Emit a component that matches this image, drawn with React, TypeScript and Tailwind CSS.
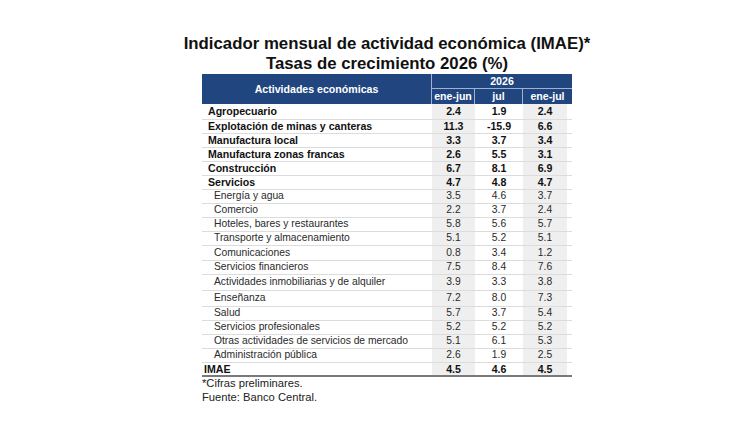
const rows: { label: string; v: [string, string, string]; bold?: boolean; sub?: boolean; h?: string }[] = [
  { label: 'Agropecuario', v: ['2.4', '1.9', '2.4'], bold: true, h: 'h-[16px]' },
  { label: 'Explotación de minas y canteras', v: ['11.3', '-15.9', '6.6'], bold: true },
  { label: 'Manufactura local', v: ['3.3', '3.7', '3.4'], bold: true },
  { label: 'Manufactura zonas francas', v: ['2.6', '5.5', '3.1'], bold: true },
  { label: 'Construcción', v: ['6.7', '8.1', '6.9'], bold: true },
  { label: 'Servicios', v: ['4.7', '4.8', '4.7'], bold: true },
  { label: 'Energía y agua', v: ['3.5', '4.6', '3.7'], sub: true },
  { label: 'Comercio', v: ['2.2', '3.7', '2.4'], sub: true },
  { label: 'Hoteles, bares y restaurantes', v: ['5.8', '5.6', '5.7'], sub: true },
  { label: 'Transporte y almacenamiento', v: ['5.1', '5.2', '5.1'], sub: true },
  { label: 'Comunicaciones', v: ['0.8', '3.4', '1.2'], sub: true, h: 'h-[15px]' },
  { label: 'Servicios financieros', v: ['7.5', '8.4', '7.6'], sub: true },
  { label: 'Actividades inmobiliarias y de alquiler', v: ['3.9', '3.3', '3.8'], sub: true, h: 'h-[16px]' },
  { label: 'Enseñanza', v: ['7.2', '8.0', '7.3'], sub: true, h: 'h-[16px]' },
  { label: 'Salud', v: ['5.7', '3.7', '5.4'], sub: true },
  { label: 'Servicios profesionales', v: ['5.2', '5.2', '5.2'], sub: true },
  { label: 'Otras actividades de servicios de mercado', v: ['5.1', '6.1', '5.3'], sub: true },
  { label: 'Administración pública', v: ['2.6', '1.9', '2.5'], sub: true },
]

function Row({ r }: { r: (typeof rows)[number] }) {
  const weight = r.bold ? 'font-bold text-[#111] text-[10.6px]' : 'text-[#2a2a2a] text-[10.3px]'
  return (
    <div className={`flex ${r.h ?? 'h-[14px]'} border-b border-[#dcdcdc] ${weight}`}>
      <div className={`w-[230px] flex items-center ${r.sub ? 'pl-[12px]' : 'pl-[6px]'}`}>{r.label}</div>
      <div className="w-[43px] flex items-center justify-center bg-[#efefef]">{r.v[0]}</div>
      <div className="w-[48px] flex items-center justify-center">{r.v[1]}</div>
      <div className="w-[44px] flex items-center justify-center bg-[#efefef]">{r.v[2]}</div>
      <div className="w-[5px]" />
    </div>
  )
}

export default function App() {
  return (
    <div className="w-[750px] h-[426px] bg-white" style={{ fontFamily: '"Liberation Sans", Arial, sans-serif' }}>
      <div className="w-[450px] ml-[162px] pt-[34px]">
        <h1 className="text-center font-bold text-[16.8px] leading-[20px] text-[#111] whitespace-nowrap">
          Indicador mensual de actividad económica (IMAE)*
          <br />
          Tasas de crecimiento 2026 (%)
        </h1>

        <div className="w-[370px] ml-[40px] leading-none">
          {/* Header */}
          <div className="flex bg-[#21467f] text-white font-bold text-[10.6px] h-[30px]">
            <div className="w-[230px] flex items-center justify-center border-r border-[#9fb2d0]">
              Actividades económicas
            </div>
            <div className="flex-1 flex flex-col">
              <div className="h-[15px] flex items-center justify-center border-b border-[#9fb2d0]">2026</div>
              <div className="flex flex-1">
                <div className="w-[43px] flex items-center justify-center border-r border-[#9fb2d0]">ene-jun</div>
                <div className="w-[48px] flex items-center justify-center border-r border-[#9fb2d0]">jul</div>
                <div className="flex-1 flex items-center justify-center">ene-jul</div>
              </div>
            </div>
          </div>

          {rows.map((r) => (
            <Row key={r.label} r={r} />
          ))}

          {/* Total */}
          <div className="flex h-[14px] border-b-2 border-[#7a7a7a] font-bold text-[#111] text-[10.6px]">
            <div className="w-[230px] flex items-center pl-[2px]">IMAE</div>
            <div className="w-[43px] flex items-center justify-center bg-[#efefef]">4.5</div>
            <div className="w-[48px] flex items-center justify-center">4.6</div>
            <div className="w-[44px] flex items-center justify-center bg-[#efefef]">4.5</div>
            <div className="w-[5px]" />
          </div>

          <div className="text-[11.2px] leading-[14px] text-[#222] -mt-[1px]">
            <p>*Cifras preliminares.</p>
            <p>Fuente: Banco Central.</p>
          </div>
        </div>
      </div>
    </div>
  )
}
